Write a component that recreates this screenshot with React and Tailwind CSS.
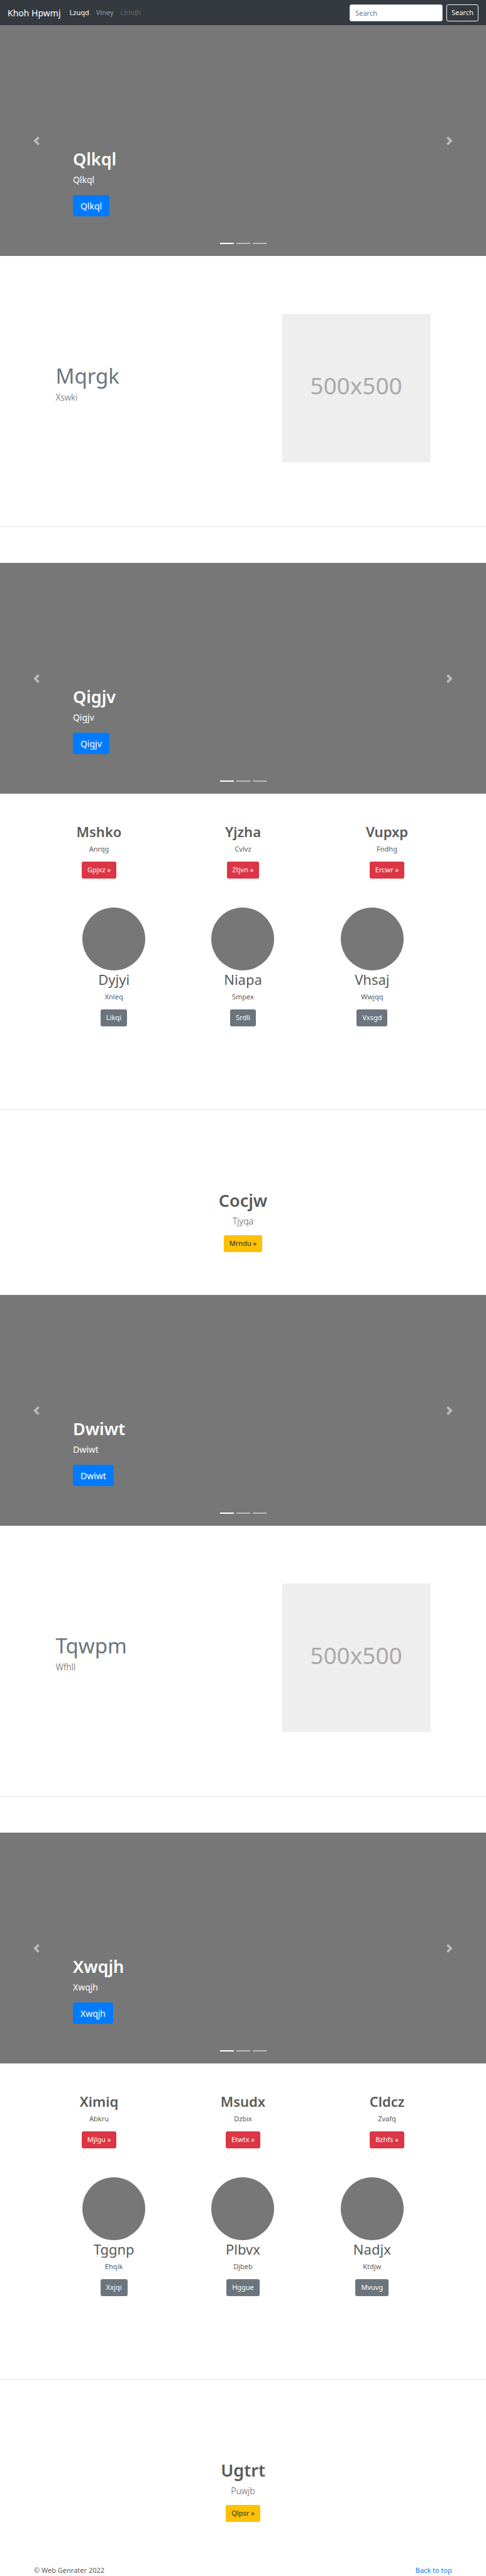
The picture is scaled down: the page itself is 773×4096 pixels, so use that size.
import React from "react";

const slides = [0, 1, 2];

function Navbar() {
  return (
    <nav className="flex h-10 items-center bg-[#343a40] px-3 text-[11px]">
      <a href="#" className="mr-[14px] text-[14px] leading-[21px] text-white">Khoh Hpwmj</a>
      <ul className="flex flex-1 gap-[11px]">
        <li><a href="#" className="text-white">Lzuqd</a></li>
        <li><a href="#" className="text-white/50">Viney</a></li>
        <li><a href="#" aria-disabled="true" className="text-white/25">Lhhdh</a></li>
      </ul>
      <form className="flex gap-[6px]" onSubmit={(e) => e.preventDefault()}>
        <input
          type="search"
          placeholder="Search"
          aria-label="Search"
          className="h-[27px] w-[148px] rounded-[3px] border border-[#ced4da] bg-white px-2 text-[#495057] placeholder:text-[#6c757d]"
        />
        <button type="submit" className="h-[27px] rounded-[3px] border border-[#f8f9fa] px-[7px] text-[#f8f9fa]">
          Search
        </button>
      </form>
    </nav>
  );
}

function Chevron({ d }) {
  return (
    <svg viewBox="0 0 8 8" className="size-[14px]" fill="#fff" aria-hidden="true">
      <path d={d} />
    </svg>
  );
}

function Carousel({ title }) {
  return (
    <section className="relative flex h-[367px] flex-col items-start justify-end bg-[#777] px-[15%] pb-[63px] text-white">
      <h1 className="mb-1 text-[27px] leading-[36px] font-semibold">{title}</h1>
      <p className="mb-[14px] text-[14px] leading-[21px]">{title}</p>
      <a href="#" className="flex h-[34px] items-center rounded-[4px] bg-[#007bff] px-3 text-[14px]">{title}</a>
      <button type="button" aria-label="Previous" className="absolute inset-y-0 left-0 flex w-[15%] items-center justify-center opacity-50">
        <Chevron d="M5.25 0l-4 4 4 4 1.5-1.5-2.5-2.5 2.5-2.5-1.5-1.5z" />
      </button>
      <button type="button" aria-label="Next" className="absolute inset-y-0 right-0 flex w-[15%] items-center justify-center opacity-50">
        <Chevron d="M2.75 0l-1.5 1.5 2.5 2.5-2.5 2.5 1.5 1.5 4-4-4-4z" />
      </button>
      <div className="absolute inset-x-0 bottom-[19px] flex justify-center gap-1">
        {slides.map((i) => (
          <button
            key={i}
            type="button"
            aria-label={`Slide ${i + 1}`}
            className={i === 0 ? "h-[2px] w-[22px] bg-white" : "h-[2px] w-[22px] bg-white/50"}
          />
        ))}
      </div>
    </section>
  );
}

function Featurette({ title, lead }) {
  return (
    <section className="pt-[92px] pb-[57px]">
      <div className="mx-auto flex max-w-[596px] justify-between">
        <div className="pt-20">
          <h2 className="mb-1 text-[33px] leading-[38px] text-[#6c757d]">{title}</h2>
          <p className="text-[14px] leading-[21px] font-light">{lead}</p>
        </div>
        <div className="flex aspect-square w-[236px] items-center justify-center bg-[#eee] pb-2 text-[37px] text-[#aaa]">
          500x500
        </div>
      </div>
      <hr className="mt-[102px] border-[#e5e5e5]" />
    </section>
  );
}

function Column({ title, text, action, circle }) {
  return (
    <div className="flex flex-col items-center">
      {circle && <div className="size-[100px] rounded-full bg-[#777]" />}
      <h2 className={circle ? "mb-1 text-[22px] leading-[29px]" : "mb-1 text-[22px] leading-[29px] font-semibold"}>
        {title}
      </h2>
      <p className="mb-3 text-[11px] leading-[17px]">{text}</p>
      <a
        href="#"
        className={
          circle
            ? "flex h-[27px] items-center rounded-[3px] bg-[#6c757d] px-[9px] text-[11px] text-white"
            : "flex h-[27px] items-center rounded-[3px] bg-[#dc3545] px-[9px] text-[11px] text-white"
        }
      >
        {action}
      </a>
    </div>
  );
}

function Marketing({ offers, people, title, lead, action }) {
  return (
    <section className="pt-[46px] pb-[68px]">
      <div className="mx-auto grid max-w-[687px] grid-cols-3">
        {offers.map(([t, p, a]) => <Column key={t} title={t} text={p} action={a} />)}
      </div>
      <div className="mx-auto mt-[46px] grid max-w-[616px] grid-cols-3">
        {people.map(([t, p, a]) => <Column key={t} title={t} text={p} action={a} circle />)}
      </div>
      <hr className="mt-[132px] border-[#e5e5e5]" />
      <div className="mt-[126px] flex flex-col items-center">
        <h1 className="mb-1 text-[27px] leading-[36px] font-semibold">{title}</h1>
        <p className="mb-3 text-[14px] leading-[21px] font-light">{lead}</p>
        <a href="#" className="flex h-[27px] items-center rounded-[3px] bg-[#ffc107] px-[9px] text-[11px] text-[#212529]">
          {action}
        </a>
      </div>
    </section>
  );
}

export default function App() {
  return (
    <div className="bg-white font-['Noto_Sans',sans-serif] text-[#5a5a5a]">
      <Navbar />
      <main>
        <Carousel title="Qlkql" />
        <Featurette title="Mqrgk" lead="Xswki" />
        <Carousel title="Qigjv" />
        <Marketing
          offers={[["Mshko", "Anrqg", "Gpjxz »"], ["Yjzha", "Cvlvz", "Ztjvn »"], ["Vupxp", "Fndhg", "Ercwr »"]]}
          people={[["Dyjyi", "Xnleq", "Likqi"], ["Niapa", "Smpex", "Srdli"], ["Vhsaj", "Wwjqq", "Vxsgd"]]}
          title="Cocjw"
          lead="Tjyqa"
          action="Mrndu »"
        />
        <Carousel title="Dwiwt" />
        <Featurette title="Tqwpm" lead="Wfhll" />
        <Carousel title="Xwqjh" />
        <Marketing
          offers={[["Ximiq", "Abkru", "Mjlgu »"], ["Msudx", "Dzbix", "Etwtx »"], ["Cldcz", "Zvafq", "Bzhfs »"]]}
          people={[["Tggnp", "Ehqik", "Xxjqi"], ["Plbvx", "Djbeb", "Hggue"], ["Nadjx", "Ktdjw", "Mvuvg"]]}
          title="Ugtrt"
          lead="Puwjb"
          action="Qlpsr »"
        />
      </main>
      <footer className="flex justify-between px-[54px] text-[11px] leading-[18px]">
        <p>© Web Genrater 2022</p>
        <a href="#" className="text-[#007bff]">Back to top</a>
      </footer>
    </div>
  );
}
